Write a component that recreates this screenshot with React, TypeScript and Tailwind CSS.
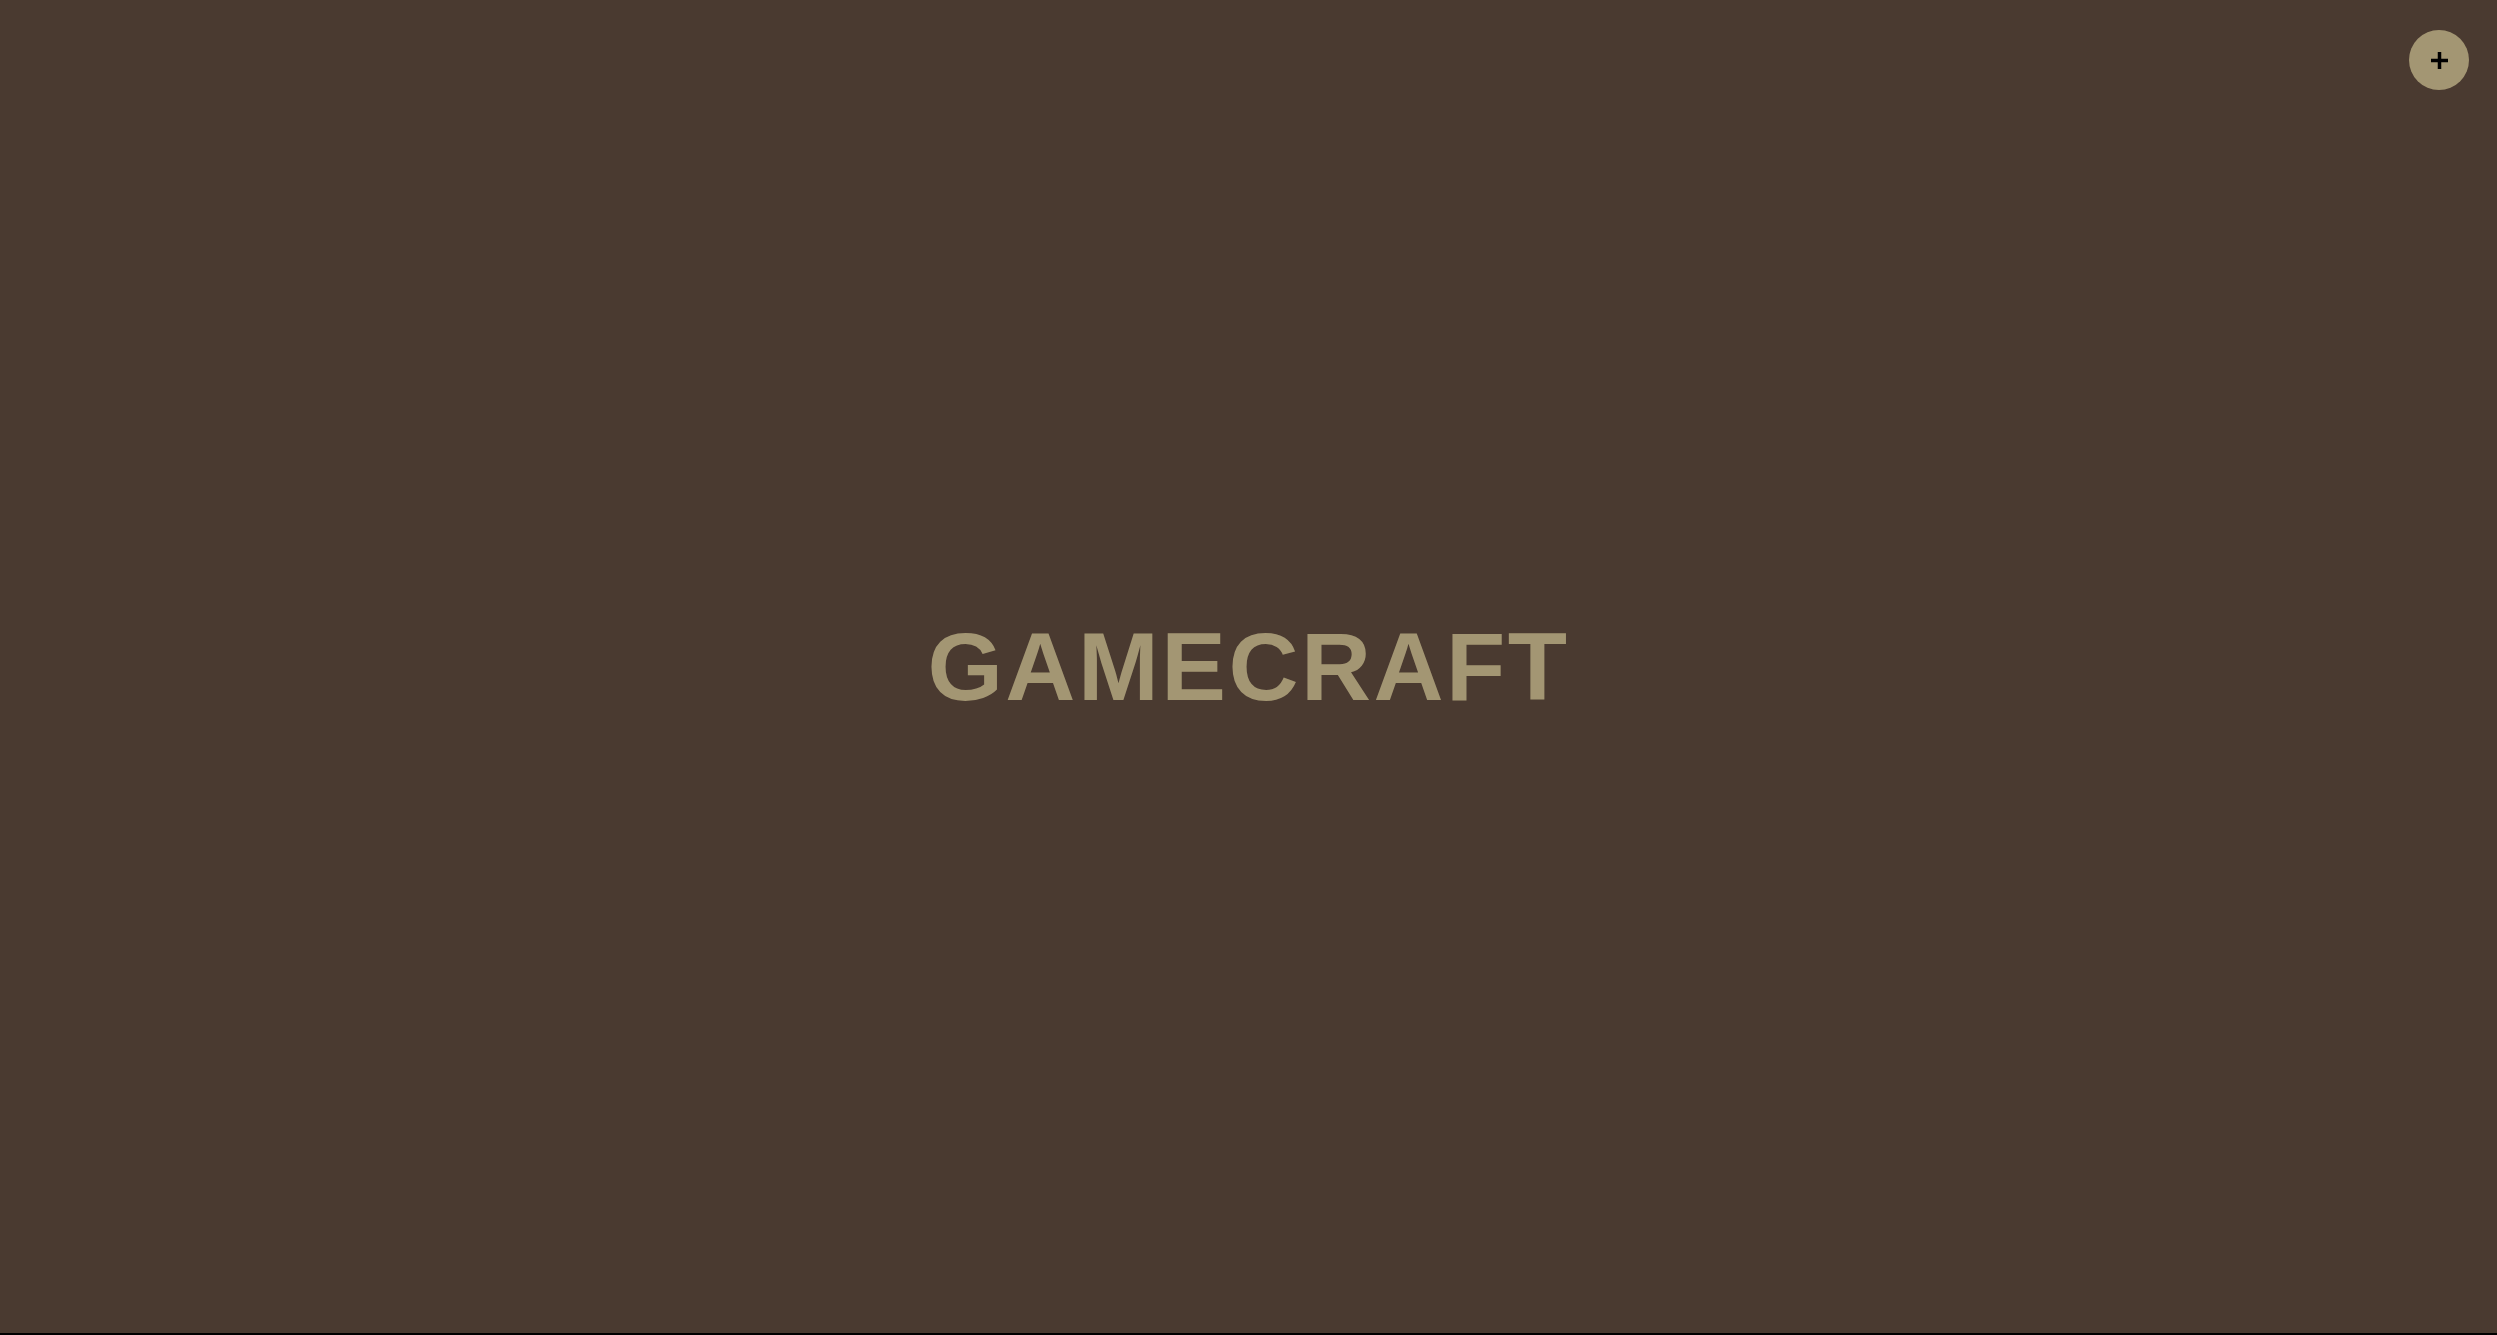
import React from "react";

export default function App() {
  return (
    <div className="h-screen w-full bg-black">
      <div
        className="relative flex h-[1333px] w-full items-center justify-center bg-[#4a3a30]"
        style={{ fontFamily: '"Liberation Sans", Arial, sans-serif' }}
      >
        <h1 className="text-[97px] font-bold leading-none tracking-[2.5px] text-[#a39673]">
          GAMECRAFT
        </h1>
        <button className="absolute right-[28px] top-[30px] flex h-[60px] w-[60px] items-center justify-center rounded-full bg-[#a39673]">
          <svg width="17" height="17" viewBox="0 0 17 17">
            <path d="M8.5 0v17M0 8.5h17" stroke="#000" strokeWidth="3.5" />
          </svg>
        </button>
      </div>
    </div>
  );
}
